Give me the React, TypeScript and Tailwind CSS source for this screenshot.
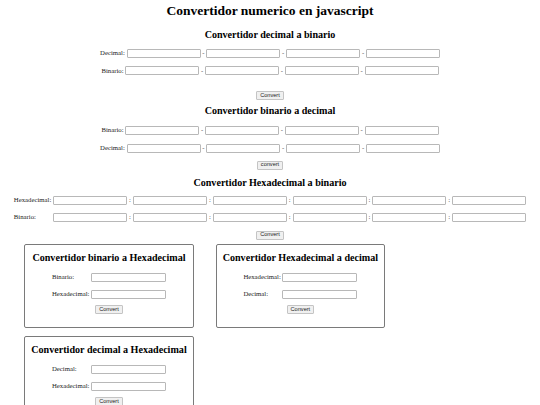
import React from 'react';

// page was shot at 1280 wide and shrunk to 540, so every size here is ~0.42 of the usual
const inputCls = 'block w-[74px] h-[9px] border border-[#b8b8b8] rounded-[1px] bg-white';
const labelCls = 'text-[6.75px] leading-none text-[#222]';

const Sep: React.FC<{ ch: string }> = ({ ch }) => (
    <span className="w-[5.8px] text-center text-[6.75px] leading-none text-[#444]">{ch}</span>
);

const ConvertButton: React.FC<{ text?: string; className?: string }> = ({ text = 'Convert', className }) => (
    <div className={`flex justify-center ${className || ''}`}>
        <button
            className="h-[8.6px] px-[3px] border border-[#c4c4c4] rounded-[1px] bg-[#f0f0f0] text-[5.6px] leading-none text-[#222]"
            style={{ fontFamily: '"Liberation Sans", Arial, sans-serif' }}
        >
            {text}
        </button>
    </div>
);

// label + four inputs, each row centered on its own
const QuadRow: React.FC<{ label: string; className?: string }> = ({ label, className }) => (
    <div className={`flex justify-center items-center h-[9px] ${className || ''}`}>
        <span className={`${labelCls} mr-[1.7px]`}>{label}</span>
        <input className={inputCls} />
        <Sep ch="-" />
        <input className={inputCls} />
        <Sep ch="-" />
        <input className={inputCls} />
        <Sep ch="-" />
        <input className={inputCls} />
    </div>
);

const HexRow: React.FC<{ label: string; className?: string }> = ({ label, className }) => (
    <div className={`flex justify-center items-center h-[9px] ${className || ''}`}>
        <span className={`${labelCls} w-[39.3px] text-left`}>{label}</span>
        {[0, 1, 2, 3, 4, 5].map(i => (
            <React.Fragment key={i}>
                {i > 0 && <Sep ch=":" />}
                <input className={inputCls} />
            </React.Fragment>
        ))}
    </div>
);

const BoxRow: React.FC<{ label: string; className?: string }> = ({ label, className }) => (
    <div className={`flex justify-center items-center h-[9px] ${className || ''}`}>
        <span className={`${labelCls} w-[39px] text-left`}>{label}</span>
        <input className="block w-[75px] h-[9px] border border-[#b8b8b8] rounded-[1px] bg-white" />
    </div>
);

const Box: React.FC<{ title: string; first: string; second: string }> = ({ title, first, second }) => (
    <div className="w-[169.4px] h-[84px] border border-[#7a7a7a] rounded-[2px] pt-[7.5px]">
        <h2 className="text-center text-[10.1px] leading-[12px] font-bold">{title}</h2>
        <BoxRow label={first} className="mt-[8.2px]" />
        <BoxRow label={second} className="mt-[8px]" />
        <ConvertButton className="mt-[6.5px]" />
    </div>
);

export default function App() {
    return (
        <div className="w-[540px] min-h-[405px] bg-white text-black" style={{ fontFamily: '"Liberation Serif", "Times New Roman", serif' }}>
            <h1 className="pt-[3px] text-center text-[13.5px] leading-[15px] font-bold">Convertidor numerico en javascript</h1>

            <h2 className="mt-[10.5px] text-center text-[10.1px] leading-[12px] font-bold">Convertidor decimal a binario</h2>
            <QuadRow label="Decimal:" className="mt-[8.7px]" />
            <QuadRow label="Binario:" className="mt-[8.3px]" />
            <ConvertButton className="mt-[15.8px]" />

            <h2 className="mt-[5.6px] text-center text-[10.1px] leading-[12px] font-bold">Convertidor binario a decimal</h2>
            <QuadRow label="Binario:" className="mt-[8.5px]" />
            <QuadRow label="Decimal:" className="mt-[8.6px]" />
            <ConvertButton text="convert" className="mt-[8.4px]" />

            <h2 className="mt-[7.9px] text-center text-[10.1px] leading-[12px] font-bold">Convertidor Hexadecimal a binario</h2>
            <HexRow label="Hexadecimal:" className="mt-[6.5px]" />
            <HexRow label="Binario:" className="mt-[8px]" />
            <ConvertButton className="mt-[9px]" />

            <div className="mt-[4.4px] pl-[24.3px] flex flex-wrap gap-x-[22px] gap-y-[8px]">
                <Box title="Convertidor binario a Hexadecimal" first="Binario:" second="Hexadecimal:" />
                <Box title="Convertidor Hexadecimal a decimal" first="Hexadecimal:" second="Decimal:" />
                <Box title="Convertidor decimal a Hexadecimal" first="Decimal:" second="Hexadecimal:" />
            </div>
        </div>
    );
}
